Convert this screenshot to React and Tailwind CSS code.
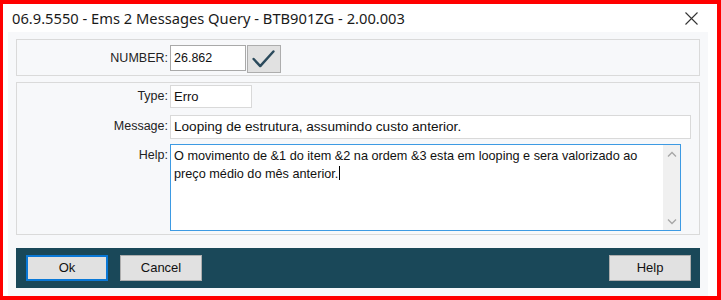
const uiFont = "font-['Liberation_Sans',Arial,sans-serif]";

function CloseIcon() {
  return (
    <svg width="13" height="13" viewBox="0 0 13 13" className="text-[#333]">
      <path d="M0.5 0.5 L12.5 12.5 M12.5 0.5 L0.5 12.5" stroke="currentColor" strokeWidth="1.1" fill="none" />
    </svg>
  );
}

function CheckIcon() {
  return (
    <svg width="34" height="28" viewBox="0 0 34 28">
      <path d="M6 14 L13 21.5 L27 6" stroke="#2b4a5c" strokeWidth="2.6" fill="none" strokeLinecap="round" strokeLinejoin="round" />
    </svg>
  );
}

function Chevron({ up }) {
  return (
    <svg width="10" height="6" viewBox="0 0 10 6">
      <path d={up ? "M1 5.5 L5 1.5 L9 5.5" : "M1 0.5 L5 4.5 L9 0.5"} stroke="#a6a6a6" strokeWidth="1.3" fill="none" />
    </svg>
  );
}

function Field({ label, children, className = "" }) {
  return (
    <div className={`flex items-start ${className}`}>
      <div className="w-[151px] shrink-0 text-right text-[12.5px] text-[#222] leading-[23px]">{label}</div>
      <div className="ml-[2px] flex-1 min-w-0">{children}</div>
    </div>
  );
}

function WinButton({ children, focused }) {
  return (
    <button
      type="button"
      className={`h-[26px] w-[82px] bg-[#e1e1e1] text-[13px] text-[#111] ${focused ? "border-2 border-[#0a78d7]" : "border border-[#adadad]"}`}
    >
      {children}
    </button>
  );
}

export default function App() {
  return (
    <div className={`flex h-[300px] w-[721px] bg-[#ff0000] pt-[4px] pl-[3px] pr-[4px] pb-[4px] ${uiFont}`}>
      <div className="flex flex-1 flex-col bg-white">
        <div className="flex h-[28px] shrink-0 items-center justify-between pl-[9px] pr-[19px]">
          <span className="font-['Noto_Sans',sans-serif] text-[14.7px] text-[#1a1a1a] pt-[1px]">06.9.5550 - Ems 2 Messages Query - BTB901ZG - 2.00.003</span>
          <CloseIcon />
        </div>
        <div className="ml-[5px] mr-[9px] flex flex-1 flex-col bg-[#f7f8fa] px-[8px] pt-[7px]">
          <div className="flex h-[37px] items-start border border-[#dadada] pt-[5px]">
            <Field label={<span className="relative top-[2px]">NUMBER:</span>} className="w-full">
              <div className="flex items-start">
                <div className="h-[26px] w-[76px] border border-[#a9a9a9] bg-white px-[3px] text-[12.5px] leading-[25px] text-[#111]">26.862</div>
                <div className="ml-[1px] flex h-[28px] w-[34px] items-center justify-center border border-[#adadad] bg-[#e1e1e1]">
                  <CheckIcon />
                </div>
              </div>
            </Field>
          </div>
          <div className="mt-[6px] flex flex-col border border-[#dadada] pt-[2px] pb-[3px]">
            <Field label="Type:">
              <div className="h-[23px] w-[82px] border border-[#d9d9d9] bg-white px-[3px] text-[13px] leading-[22px] text-[#111]">Erro</div>
            </Field>
            <Field label="Message:" className="mt-[7px]">
              <div className="mr-[8px] h-[24px] border border-[#d9d9d9] bg-white px-[3px] text-[13.6px] leading-[22px] text-[#111]">
                Looping de estrutura, assumindo custo anterior.
              </div>
            </Field>
            <Field label="Help:" className="mt-[5px]">
              <div className="mr-[18px] flex h-[87px] border border-[#3d9ae3] bg-white">
                <div className="flex-1 px-[3px] pt-[4px] text-[12.7px] leading-[15px] text-[#111]">
                  O movimento de &amp;1 do item &amp;2 na ordem &amp;3 esta em looping e sera valorizado ao preço médio do mês anterior.
                  <span className="ml-[1px] inline-block h-[14px] w-[1px] translate-y-[2px] bg-black" />
                </div>
                <div className="flex w-[17px] flex-col items-center justify-between bg-[#f0f0f0] pt-[6px] pb-[5px]">
                  <Chevron up />
                  <Chevron />
                </div>
              </div>
            </Field>
          </div>
          <div className="mt-[13px] flex h-[40px] items-center justify-between bg-[#1a4859] pl-[10px] pr-[9px]">
            <div className="flex gap-[12px]">
              <WinButton focused>Ok</WinButton>
              <WinButton>Cancel</WinButton>
            </div>
            <WinButton>Help</WinButton>
          </div>
        </div>
      </div>
    </div>
  );
}
